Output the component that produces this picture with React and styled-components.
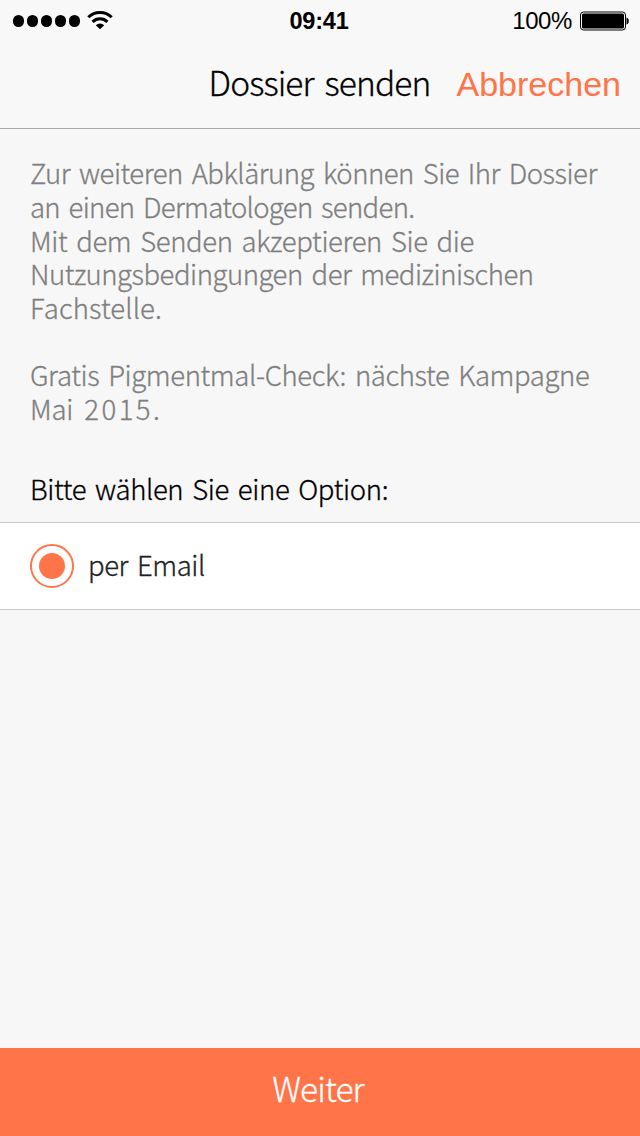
import React from "react";
import styled, { createGlobalStyle } from "styled-components";

const ORANGE = "#ff7549";

const GlobalStyle = createGlobalStyle`
  * {
    box-sizing: border-box;
  }
  body {
    margin: 0;
    background: #f7f7f7;
    font-family: "Noto Sans CJK JP", "Open Sans", sans-serif;
    font-weight: 300;
  }
`;

const Screen = styled.div`
  display: flex;
  flex-direction: column;
  width: 640px;
  height: 1136px;
  overflow: hidden;
  background: #f7f7f7;
`;

const StatusBar = styled.div`
  display: grid;
  grid-template-columns: 1fr auto 1fr;
  align-items: center;
  height: 40px;
  padding: 1px 11px 0 13px;
  background: #f8f8f8;
  font-family: "Liberation Sans", Arial, sans-serif;
  font-size: 24px;
  font-weight: 400;
  line-height: 40px;
  color: #000;
`;

const Signal = styled.div`
  display: flex;
  align-items: center;
  gap: 2.7px;
`;

const Dot = styled.span`
  width: 11.2px;
  height: 11.2px;
  border-radius: 50%;
  background: #000;
`;

const WifiIcon = styled.svg`
  width: 26px;
  height: 20px;
  margin: 0 0 2px 5px;
`;

const Clock = styled.div`
  padding-right: 4px;
  font-size: 23.5px;
  font-weight: 700;
  letter-spacing: -0.2px;
`;

const Power = styled.div`
  display: flex;
  align-items: center;
  justify-content: flex-end;
  gap: 7px;
  letter-spacing: -0.4px;
`;

const BatteryIcon = styled.svg`
  width: 50px;
  height: 20px;
  margin-bottom: 1px;
`;

const Header = styled.header`
  display: flex;
  justify-content: flex-end;
  align-items: flex-start;
  height: 89px;
  padding: 0 19px 0 0;
  background: #f8f8f8;
  border-bottom: 1px solid #ababab;
`;

const Title = styled.h1`
  width: 223px;
  margin: 0 25px 0 0;
  font-size: 33.5px;
  font-weight: 300;
  line-height: 84px;
  letter-spacing: -0.9px;
  word-spacing: 4.5px;
  white-space: nowrap;
  color: #000;
  -webkit-text-stroke: 0.3px #000;
`;

const CancelButton = styled.button`
  padding: 0;
  border: 0;
  background: none;
  font-family: "Liberation Sans", Arial, sans-serif;
  font-size: 34px;
  line-height: 88px;
  color: ${ORANGE};
`;

const Info = styled.div`
  padding: 27.4px 30px 0;
  color: #7f7f7f;
`;

const Paragraph = styled.p`
  margin: 0 0 33.6px;
`;

const Line = styled.span`
  display: block;
  font-size: 27.5px;
  line-height: 33.6px;
  letter-spacing: ${({ $spacing }) => $spacing}px;
  word-spacing: 3.2px;
  white-space: nowrap;
  -webkit-text-stroke: 0.3px currentColor;
`;

const Year = styled.span`
  margin-left: 2px;
  letter-spacing: 2.5px;
`;

const OptionLabel = styled.div`
  height: 50.4px;
  margin-top: 13.2px;
  padding: 0 30px;
  color: #000;
`;

const Option = styled.label`
  display: flex;
  align-items: center;
  gap: 14px;
  height: 88px;
  padding: 0 30px;
  background: #fff;
  border-top: 1px solid #c8c8c8;
  border-bottom: 1px solid #c8c8c8;
  color: #222;
`;

const Radio = styled.span`
  display: flex;
  align-items: center;
  justify-content: center;
  width: 44px;
  height: 44px;
  border: 2px solid ${ORANGE};
  border-radius: 50%;

  &::after {
    content: "";
    width: 26px;
    height: 26px;
    border-radius: 50%;
    background: ${ORANGE};
  }
`;

const OptionText = styled.span`
  padding-bottom: 4px;
`;

const NextButton = styled.button`
  height: 88px;
  margin-top: auto;
  padding: 0 4px 10px 0;
  border: 0;
  background: ${ORANGE};
  font-family: inherit;
  font-size: 33.5px;
  font-weight: 300;
  letter-spacing: -0.9px;
  color: #fff;
  -webkit-text-stroke: 0.3px #fff;
`;

const intro = [
  { text: "Zur weiteren Abklärung können Sie Ihr Dossier", spacing: -0.48 },
  { text: "an einen Dermatologen senden.", spacing: -0.68 },
  { text: "Mit dem Senden akzeptieren Sie die", spacing: -0.38 },
  { text: "Nutzungsbedingungen der medizinischen", spacing: -0.48 },
  { text: "Fachstelle.", spacing: 0.1 },
];

const App = () => {
  return (
    <>
      <GlobalStyle />
      <Screen>
        <StatusBar>
          <Signal>
            {[1, 2, 3, 4, 5].map((n) => (
              <Dot key={n} />
            ))}
            <WifiIcon viewBox="0 0 26 20" fill="none" stroke="#000">
              <path d="M1.3 7.200a16.600 16.600 0 0 1 23.400 0" strokeWidth="3" />
              <path d="M5.600 11.900a10.500 10.500 0 0 1 14.800 0" strokeWidth="3" />
              <path
                d="M8.800 15.300a6 6 0 0 1 8.400 0L13 19.300z"
                fill="#000"
                stroke="none"
              />
            </WifiIcon>
          </Signal>
          <Clock>09:41</Clock>
          <Power>
            <span>100%</span>
            <BatteryIcon viewBox="0 0 50 20">
              <rect
                x="1.5"
                y="1"
                width="45"
                height="18"
                rx="3"
                fill="none"
                stroke="#000"
                strokeWidth="1"
              />
              <rect x="3" y="2.500" width="42" height="15" rx="1.5" />
              <path d="M47.500 6.500c3 .8 3 6.200 0 7z" />
            </BatteryIcon>
          </Power>
        </StatusBar>
        <Header>
          <Title>Dossier senden</Title>
          <CancelButton>Abbrechen</CancelButton>
        </Header>
        <Info>
          <Paragraph>
            {intro.map(({ text, spacing }) => (
              <Line key={text} $spacing={spacing}>
                {text}
              </Line>
            ))}
          </Paragraph>
          <Paragraph>
            <Line $spacing={-0.39}>
              Gratis Pigmentmal-Check: nächste Kampagne
            </Line>
            <Line $spacing={-0.2}>
              Mai <Year>2015.</Year>
            </Line>
          </Paragraph>
        </Info>
        <OptionLabel>
          <Line $spacing={-0.36}>Bitte wählen Sie eine Option:</Line>
        </OptionLabel>
        <Option>
          <Radio />
          <OptionText>
            <Line $spacing={-0.42}>per Email</Line>
          </OptionText>
        </Option>
        <NextButton>Weiter</NextButton>
      </Screen>
    </>
  );
};

export default App;
